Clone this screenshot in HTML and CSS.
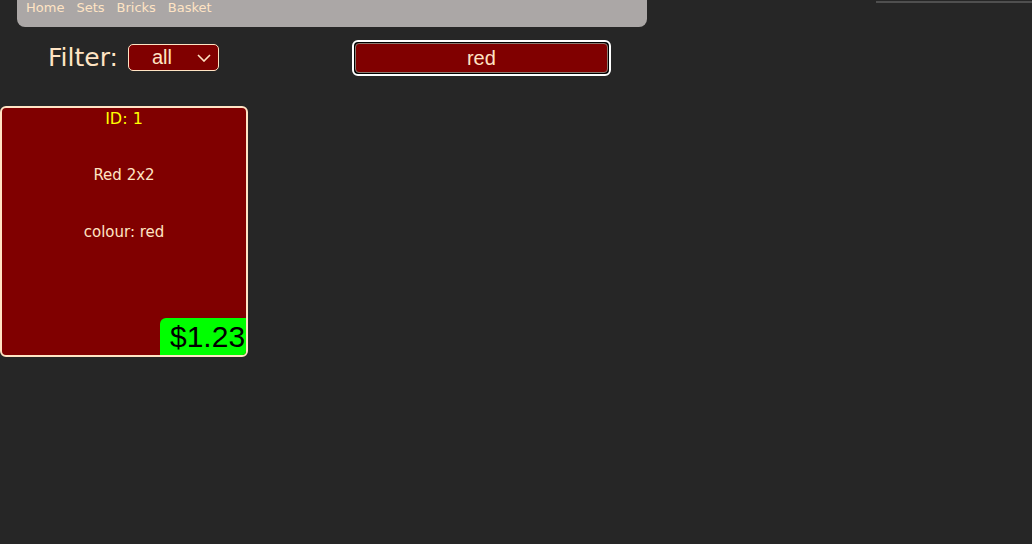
FILE: index.html
```html
<!DOCTYPE html>
<html>
<head>
<meta charset="utf-8">
<link rel="stylesheet" href="styles.css">
</head>
<body>
<header class="top">
  <nav class="nav">
    <a href="#">Home</a>
    <a href="#">Sets</a>
    <a href="#">Bricks</a>
    <a href="#">Basket</a>
  </nav>
  <div class="rule"></div>
</header>
<section class="controls">
  <label class="filter-label">Filter:</label>
  <div class="select-wrap">
    <select class="select"><option>all</option></select>
    <svg class="chev" width="14" height="8" viewBox="0 0 14 8"><path d="M1 1 L7 7 L13 1" fill="none" stroke="#ffe4c4" stroke-width="1.6"/></svg>
  </div>
  <div class="search-ring">
    <input class="search" type="text" value="red">
  </div>
</section>
<main class="grid">
  <div class="card">
    <p class="card-id">ID: 1</p>
    <p class="card-name">Red 2x2</p>
    <p class="card-colour">colour: red</p>
    <div class="price">$1.23</div>
  </div>
</main>
</body>
</html>
```
FILE: styles.css
```css
html, body {
  margin: 0;
  padding: 0;
  background: #262626;
  height: 100%;
}
body {
  font-family: "DejaVu Sans", Verdana, sans-serif;
  color: #ffe4c4;
}
.top {
  display: flex;
  align-items: flex-start;
}
.nav {
  margin-left: 17px;
  width: 621px;
  height: 27px;
  padding-left: 9px;
  background: #aba7a6;
  border-radius: 0 0 8px 8px;
  display: flex;
  gap: 12px;
  font-size: 13px;
  line-height: 15px;
}
.nav a {
  color: #ffe4c4;
  text-decoration: none;
}
.rule {
  margin-left: auto;
  margin-top: 1px;
  width: 156px;
  height: 2px;
  background: #4f4f4f;
}
.controls {
  display: flex;
  align-items: center;
  margin-top: 13px;
  padding-left: 48px;
  height: 36px;
}
.filter-label {
  font-size: 25px;
  line-height: 28px;
  color: #ffe4c4;
}
.select-wrap {
  position: relative;
  margin-left: 10px;
  margin-top: -2px;
}
.select {
  appearance: none;
  -webkit-appearance: none;
  display: block;
  width: 91px;
  height: 27px;
  box-sizing: border-box;
  background: #800000;
  color: #ffe4c4;
  border: 1px solid #ffe4c4;
  border-radius: 5px;
  font-family: "Liberation Sans", Arial, sans-serif;
  font-size: 20px;
  padding: 0 0 0 23px;
  outline: none;
}
.chev {
  position: absolute;
  right: 8px;
  top: 10px;
  pointer-events: none;
}
.search-ring {
  margin-left: 133px;
  border: 2px solid #ffffff;
  border-radius: 6px;
  background: #000;
  padding: 1px;
  display: flex;
}
.search {
  width: 253px;
  height: 30px;
  box-sizing: border-box;
  background: #800000;
  color: #ffe4c4;
  border: 1px solid #8a7a70;
  border-radius: 4px;
  text-align: center;
  font-family: "Liberation Sans", Arial, sans-serif;
  font-size: 20px;
  outline: none;
  padding: 0;
}
.grid {
  margin-top: 30px;
  display: flex;
}
.card {
  width: 248px;
  height: 251px;
  box-sizing: border-box;
  background: #800000;
  border: 2px solid #ffe4c4;
  border-radius: 6px;
  display: flex;
  flex-direction: column;
  align-items: center;
  overflow: hidden;
}
.card p {
  margin: 0;
  font-size: 15px;
  line-height: 18px;
}
.card-id {
  color: #ffff00;
  font-size: 16px !important;
  margin-top: 2px !important;
}
.card-name {
  margin-top: 38px !important;
}
.card-colour {
  margin-top: 39px !important;
}
.price {
  margin-top: auto;
  align-self: flex-end;
  background: #00ff00;
  color: #000;
  font-family: "Liberation Sans", Arial, sans-serif;
  font-size: 30px;
  line-height: 37px;
  height: 37px;
  padding-left: 10px;
  width: 76px;
  border-top-left-radius: 6px;
}
```
